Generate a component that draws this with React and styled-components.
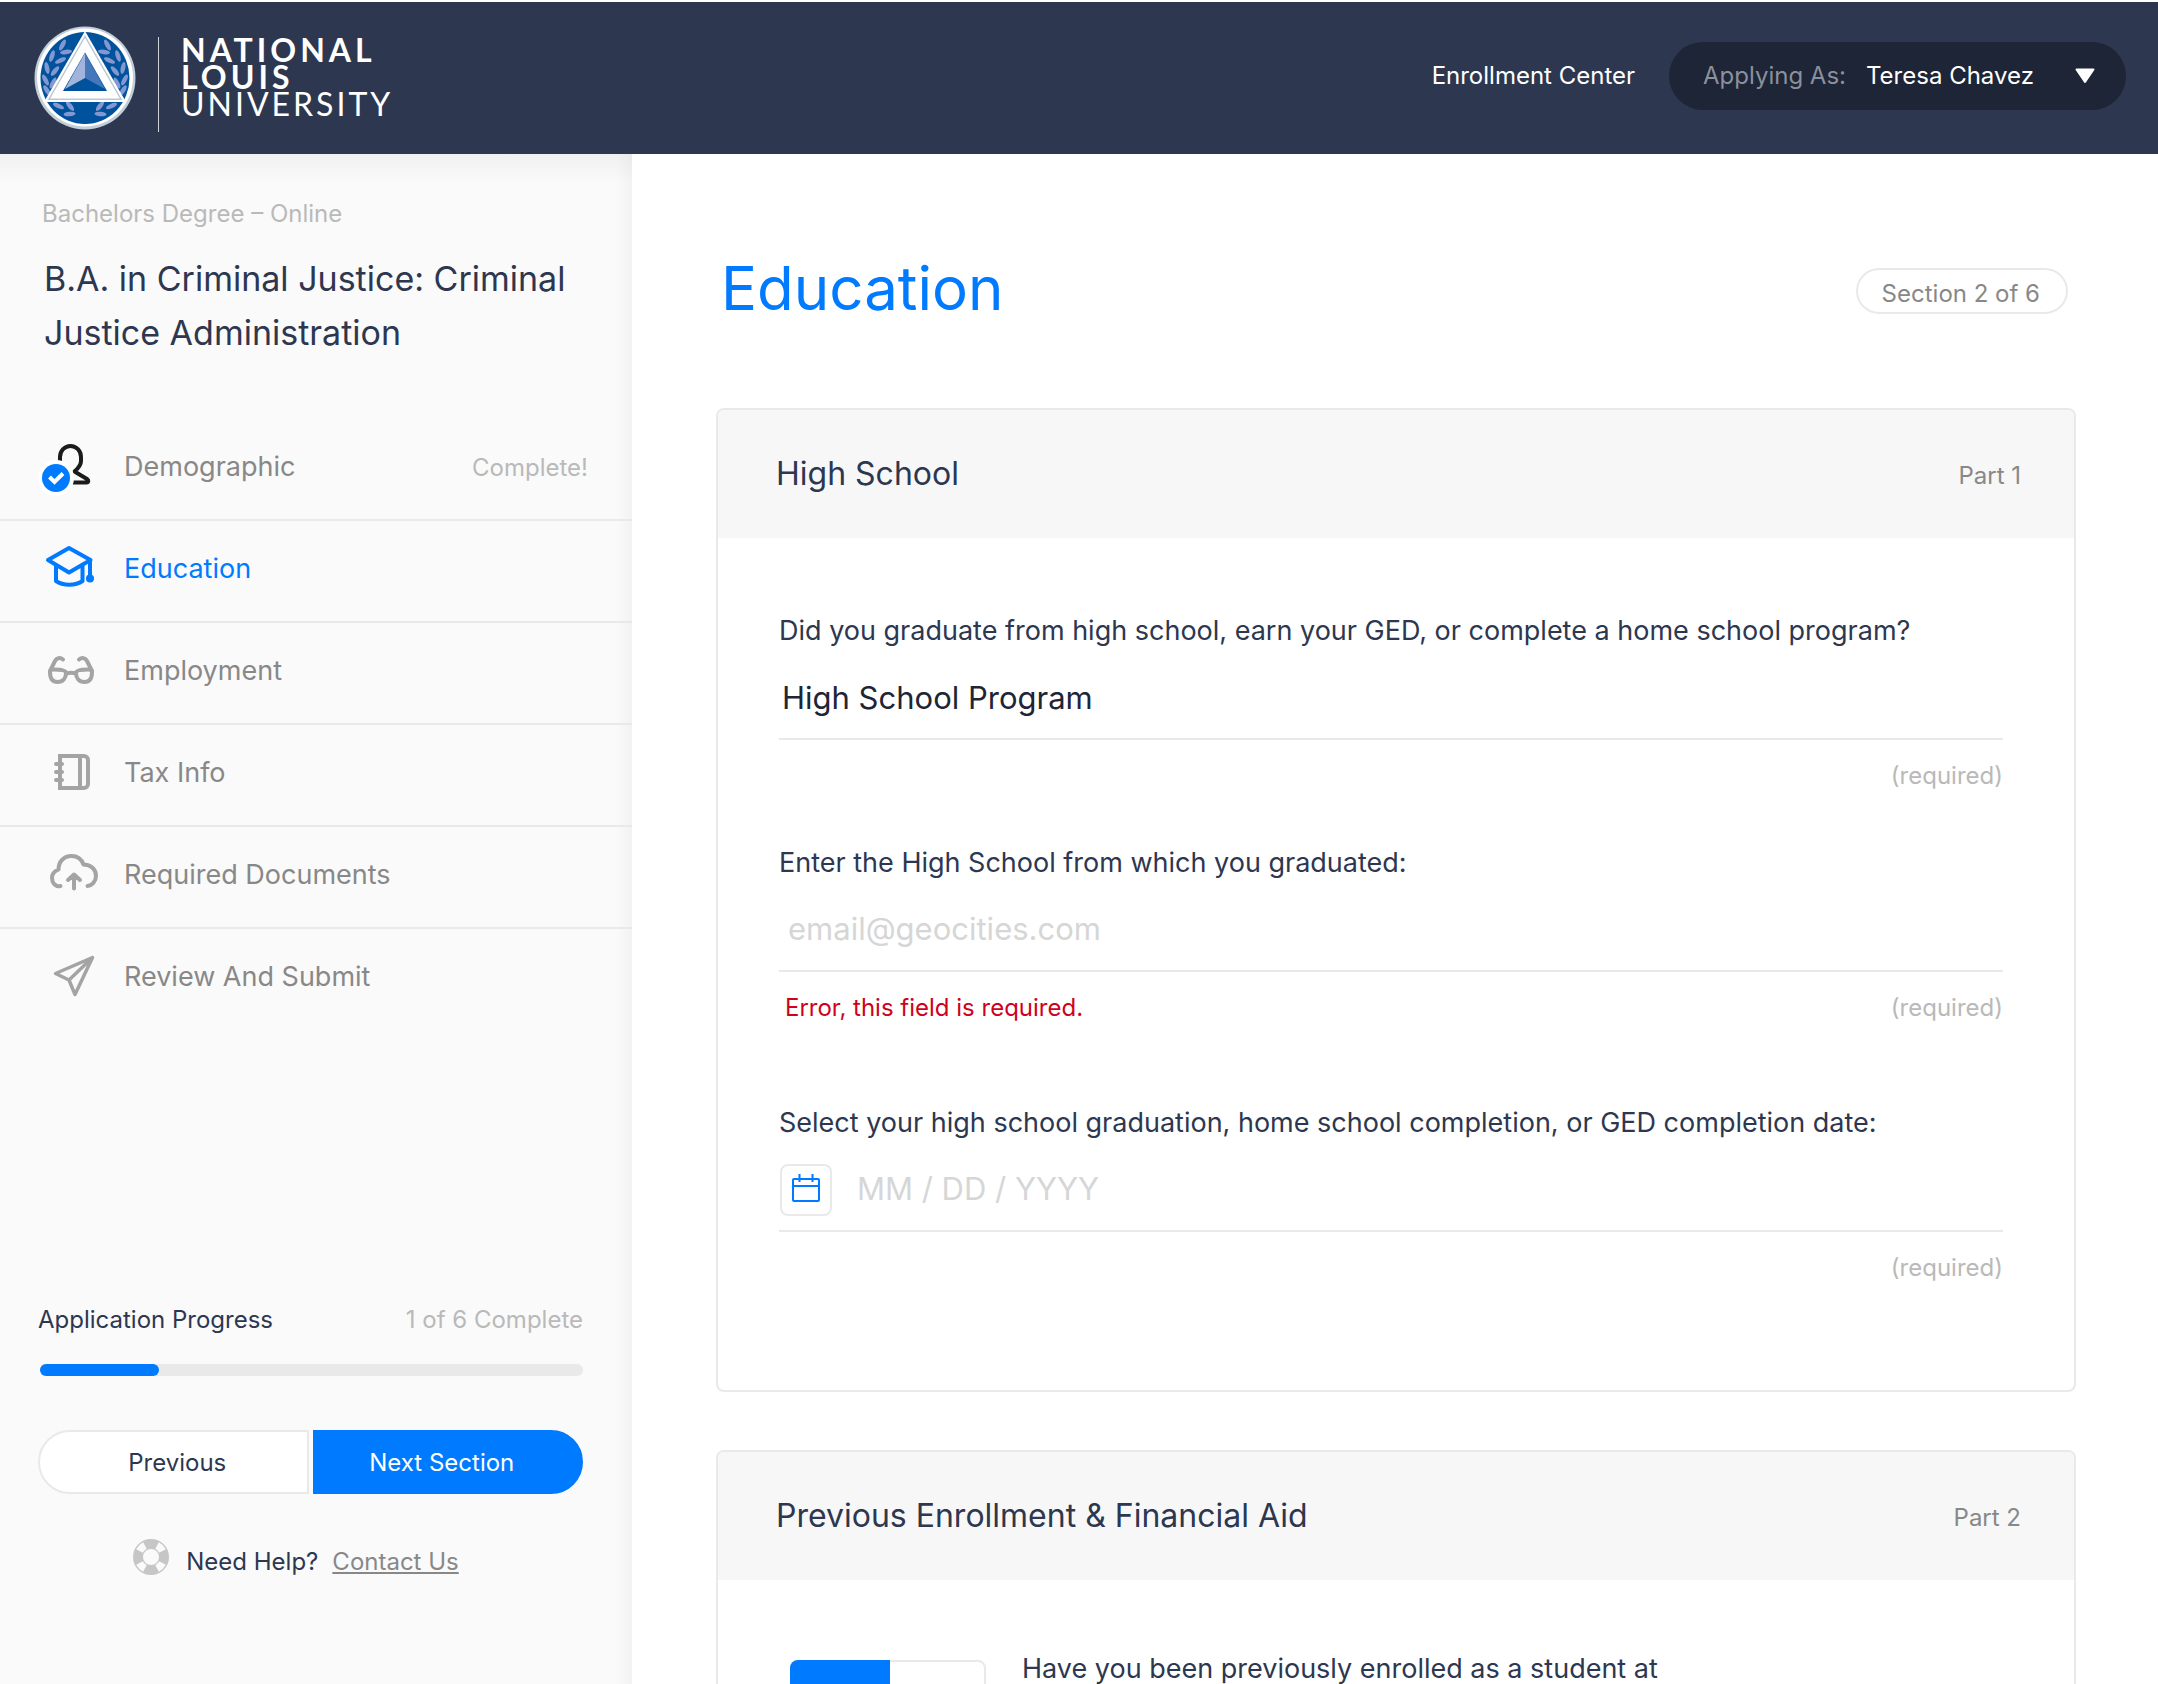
import React, { useState } from 'react';
import styled, { createGlobalStyle } from 'styled-components';

const color = {
  navy: '#2d3750',
  ink: '#1d2536',
  blue: '#007aff',
  line: '#e9e9e9',
  text: '#888888',
  muted: '#b9b9b9',
  ghost: '#d6d6d6',
  icon: '#a4a4a4',
  error: '#d0021b',
};

const GlobalStyle = createGlobalStyle`
  *, *::before, *::after { box-sizing: border-box; }
  body {
    margin: 0;
    background: #ffffff;
    color: ${color.navy};
    font-family: Inter, "Liberation Sans", sans-serif;
    font-size: 24px;
    line-height: 32px;
  }
  button, input, select { font: inherit; color: inherit; margin: 0; }
  h1, h2, p, ul, fieldset { margin: 0; padding: 0; border: 0; font-weight: 400; }
`;

const Shell = styled.div`
  height: 100vh;
  display: grid;
  grid-template: auto minmax(0, 1fr) / 632px minmax(0, 1fr);
`;

/* ---------- top bar ---------- */

const TopBar = styled.header`
  grid-column: 1 / -1;
  height: 154px;
  border-top: 2px solid #ffffff;
  background: ${color.navy};
  color: #ffffff;
  display: flex;
  align-items: center;
  justify-content: space-between;
  padding: 0 32px 0 34px;
`;

const Brand = styled.a`
  display: flex;
  align-items: center;
  color: inherit;
  text-decoration: none;
`;

const BrandRule = styled.span`
  width: 1px;
  height: 95px;
  margin: 12px 22px 0;
  background: #cfd3da;
`;

const Wordmark = styled.span`
  display: flex;
  flex-direction: column;
  padding-bottom: 4px;
  font-family: Lato, sans-serif;
  font-size: 32px;
  line-height: 27px;
  font-weight: 700;
  letter-spacing: 4px;
`;

const WordmarkLight = styled.span`
  font-weight: 400;
  letter-spacing: 3px;
`;

const TopNav = styled.nav`
  display: flex;
  align-items: center;
  gap: 34px;
  padding-bottom: 4px;
`;

const TopLink = styled.a`
  color: inherit;
  text-decoration: none;
`;

const Account = styled.div`
  display: flex;
  align-items: center;
  gap: 20px;
  height: 68px;
  padding: 0 30px 0 34px;
  border-radius: 34px;
  background: ${color.ink};
`;

const AccountLabel = styled.label`
  color: #8b909d;
`;

const AccountPicker = styled.div`
  display: flex;
  align-items: center;
  gap: 40px;
`;

const AccountSelect = styled.select`
  appearance: none;
  border: 0;
  padding: 0;
  background: transparent;
  color: #ffffff;
`;

/* ---------- sidebar ---------- */

const Sidebar = styled.aside`
  display: flex;
  flex-direction: column;
  padding: 44px 0 98px;
  overflow-y: auto;
  scrollbar-width: none;
  background:
    linear-gradient(to bottom, rgba(0, 0, 0, 0.04), rgba(0, 0, 0, 0)) top / 100% 30px no-repeat,
    linear-gradient(to left, rgba(0, 0, 0, 0.03), rgba(0, 0, 0, 0)) right / 16px 100% no-repeat,
    #fafafa;
`;

const Degree = styled.p`
  padding: 0 42px;
  color: ${color.muted};
`;

const Program = styled.h2`
  margin: 22px 42px 59px 44px;
  font-size: 34px;
  line-height: 54px;
`;

const Steps = styled.ul`
  list-style: none;
`;

const Step = styled.li`
  height: 102px;
  border-bottom: 2px solid ${color.line};
  &:last-child { border-bottom-color: transparent; }
`;

const StepLink = styled.a`
  display: flex;
  align-items: center;
  height: 100%;
  padding: 0 44px 4px 38px;
  font-size: 27px;
  text-decoration: none;
  color: ${(p) => (p.$active ? color.blue : color.text)};
`;

const StepIcon = styled.svg`
  flex: none;
  width: 64px;
  height: 64px;
  margin: 0 22px 2px 0;
  fill: none;
  stroke: ${(p) => (p.$active ? color.blue : color.icon)};
  stroke-width: 4;
  stroke-linecap: round;
  stroke-linejoin: round;
`;

const StepStatus = styled.span`
  margin-left: auto;
  padding-top: 2px;
  font-size: 24px;
  color: ${color.muted};
`;

const SidebarFooter = styled.footer`
  margin-top: auto;
  padding: 0 49px 0 38px;
`;

const ProgressLabels = styled.div`
  display: flex;
  justify-content: space-between;
  margin-bottom: 28px;
`;

const Muted = styled.span`
  color: ${color.muted};
`;

const ProgressTrack = styled.div`
  height: 12px;
  margin-left: 2px;
  border-radius: 6px;
  background: ${color.line};
`;

const ProgressFill = styled.div`
  height: 100%;
  border-radius: 6px;
  background: ${color.blue};
`;

const Pager = styled.div`
  display: grid;
  grid-template-columns: 1fr 1fr;
  gap: 4px;
  margin: 54px 0 44px;
`;

const PagerButton = styled.button`
  height: 64px;
  border: 2px solid ${(p) => (p.$primary ? color.blue : color.line)};
  border-radius: ${(p) => (p.$primary ? '0 32px 32px 0' : '32px 0 0 32px')};
  background: ${(p) => (p.$primary ? color.blue : '#ffffff')};
  color: ${(p) => (p.$primary ? '#ffffff' : color.navy)};
  padding: ${(p) => (p.$primary ? '2px 12px 0 0' : '2px 0 0 8px')};
`;

const Help = styled.p`
  display: flex;
  align-items: center;
  justify-content: center;
  padding-right: 30px;
`;

const HelpIcon = styled.svg`
  width: 38px;
  height: 38px;
  margin: 0 16px 10px 0;
`;

const HelpLink = styled.a`
  margin-left: 14px;
  color: ${color.text};
  text-underline-offset: 2px;
  text-decoration-thickness: 2px;
`;

/* ---------- main column ---------- */

const Main = styled.main`
  overflow-y: auto;
  scrollbar-width: none;
  padding: 98px 82px 60px 84px;
`;

const PageHead = styled.div`
  display: flex;
  align-items: center;
  justify-content: space-between;
  padding: 0 8px 0 5px;
  margin-bottom: 84px;
`;

const PageTitle = styled.h1`
  font-size: 60px;
  line-height: 72px;
  color: ${color.blue};
`;

const SectionBadge = styled.span`
  height: 46px;
  margin-top: 6px;
  padding: 8px 26px 0 24px;
  border: 2px solid ${color.line};
  border-radius: 23px;
  color: ${color.text};
`;

const Card = styled.section`
  border: 2px solid ${color.line};
  border-radius: 8px;
  margin-bottom: 58px;
  overflow: hidden;
`;

const CardHead = styled.div`
  display: flex;
  align-items: center;
  justify-content: space-between;
  height: 128px;
  padding: 0 53px 0 58px;
  background: #f7f7f7;
`;

const CardTitle = styled.h2`
  font-size: 32px;
  line-height: 40px;
`;

const CardPart = styled.span`
  padding-top: 4px;
  color: ${color.text};
`;

const Fields = styled.div`
  padding: 75px 71px 106px 61px;
`;

const Field = styled.div`
  &:not(:last-child) { margin-bottom: ${(p) => (p.$error ? 81 : 53)}px; }
`;

const FieldLabel = styled.label`
  display: block;
  margin-bottom: 5px;
  font-size: 27px;
  line-height: 36px;
`;

const Control = styled.div`
  display: flex;
  align-items: center;
  gap: 16px;
  height: 86px;
  border-bottom: 2px solid ${color.line};
`;

const TextInput = styled.input`
  flex: 1;
  min-width: 0;
  height: 60px;
  border: 0;
  padding: 0 9px;
  background: transparent;
  font-size: 31px;
  color: ${color.ink};
  &::placeholder { color: ${color.ghost}; opacity: 1; }
`;

const SelectInput = styled.select`
  flex: 1;
  appearance: none;
  height: 60px;
  border: 0;
  padding: 4px 3px 0;
  background: transparent;
  font-size: 31px;
  line-height: 44px;
  color: ${color.ink};
`;

const CalendarButton = styled.button`
  display: flex;
  align-items: center;
  justify-content: center;
  flex: none;
  width: 52px;
  height: 52px;
  margin: 4px 0 0 1px;
  padding: 0 0 4px;
  border: 2px solid ${color.line};
  border-radius: 8px;
  background: #ffffff;
`;

const FieldNotes = styled.div`
  display: flex;
  justify-content: space-between;
  margin-top: 20px;
`;

const ErrorText = styled.span`
  padding-left: 6px;
  color: ${color.error};
`;

const Required = styled.span`
  margin-left: auto;
  color: ${color.muted};
`;

const Question = styled.fieldset`
  display: flex;
  align-items: flex-start;
  gap: 36px;
  padding: 69px 72px;
`;

const QuestionText = styled.p`
  max-width: 680px;
  font-size: 27px;
  line-height: 40px;
`;

const Toggle = styled.div`
  display: flex;
  flex: none;
  width: 196px;
  height: 76px;
  margin-top: 11px;
  border: 2px solid ${color.line};
  border-radius: 8px;
`;

const ToggleOption = styled.label`
  flex: 1;
  display: flex;
  align-items: center;
  justify-content: center;
  margin: -2px;
  padding-top: 10px;
  border-radius: ${(p) => (p.$checked ? '8px 0 0 8px' : '0')};
  background: ${(p) => (p.$checked ? color.blue : 'transparent')};
  color: ${(p) => (p.$checked ? '#ffffff' : color.text)};
`;

const ToggleRadio = styled.input`
  appearance: none;
  width: 0;
  height: 0;
`;

/* ---------- drawings ---------- */

const leaves = [
  [28.5, 19, -62], [32, 26, -8], [18, 30, -72], [26.5, 34.5, -25],
  [13, 42, 78], [21, 45, -50], [11.5, 54, 62], [19, 57, -62],
  [13, 64.5, 58], [24.5, 80, 25], [36, 80, 52], [35.5, 88, -5],
];

function Seal() {
  const branch = leaves.map(([x, y, r]) => (
    <ellipse key={`${x}-${y}`} cx={x} cy={y} rx="6" ry="2.3" transform={`rotate(${r} ${x} ${y})`} />
  ));
  return (
    <svg width="102" height="104" viewBox="0 0 102 104" aria-hidden="true">
      <ellipse cx="51" cy="52" rx="50.5" ry="51.5" fill="#c3cfd8" />
      <ellipse cx="51" cy="51.5" rx="48" ry="49" fill="#fff" />
      <ellipse cx="51" cy="52" rx="44.5" ry="46" fill="#00529c" />
      <g fill="#8398d0">
        {branch}
        <g transform="translate(102 0) scale(-1 1)">{branch}</g>
      </g>
      <path d="M51 5L10 76h82z" fill="#fff" />
      <path d="M51 10.5L15 73.200h72z" fill="none" stroke="#bcc8d0" strokeWidth="1.5" />
      <path d="M51 26.5L29 65h44z" fill="#00529c" />
      <path d="M51 27L31 63l20-11z" fill="#a3b4dc" />
      <path d="M51 27l20 36-20-11z" fill="#4577bb" />
    </svg>
  );
}

function Caret() {
  return (
    <svg width="22" height="16" viewBox="0 0 22 16" aria-hidden="true">
      <path d="M2.5 1.5h17L11 14z" fill="#fff" stroke="#fff" strokeWidth="2" strokeLinejoin="round" />
    </svg>
  );
}

const icons = {
  person: (
    <>
      <path stroke="#1b1b1b" d="M22 28V23a10.500 11 0 0 1 21 0v4c0 4-2.500 7-6.500 10.500l12.500 7.500c2 1.300 1.500 3.500-.5 3.500H34" />
      <circle cx="18" cy="44" r="18" fill="#fff" stroke="none" />
      <circle cx="18" cy="44" r="14" fill={color.blue} stroke="none" />
      <path stroke="#fff" strokeLinecap="butt" strokeLinejoin="miter" d="M11.500 43l5 5 8.500-8.500" />
    </>
  ),
  cap: (
    <>
      <path d="M10 24l21-12 21.500 12L31 36.500z" />
      <path d="M18 30v15c7 5 19.500 5 26.500 0V30M52 25v16" />
      <circle cx="52" cy="42.5" r="4" fill={color.blue} stroke="none" />
    </>
  ),
  glasses: (
    <>
      <path d="M12 34c0-2 1.500-2.500 4-2.500 4 0 12 0 12 3.500 0 5-3 9-8.500 9C14 44 12 40.500 12 34z" />
      <path d="M54 34c0-2-1.500-2.500-4-2.500-4 0-12 0-12 3.500 0 5 3 9 8.500 9C52 44 54 40.500 54 34z" />
      <path d="M28 35.500c3-1 7-1 10 0M12 33l5-10c1.500-3 5-4 8-1.500M54 33l-5-10c-1.500-3-5-4-8-1.500" />
    </>
  ),
  notebook: (
    <path strokeLinejoin="miter" d="M22 16h24a4 4 0 0 1 4 4v24a4 4 0 0 1-4 4H22zM42 16v32M18 24h6M18 32h6M18 40h6" />
  ),
  cloud: (
    <path d="M22.500 44C17 45 14 40.500 14 36c0-4 2.500-7 6.500-8.500 0-8 5.500-13.500 13-13.500 5.500 0 10 3 12 8.500 7.500 0 12.500 5 12.500 11.500 0 5.500-4 9.500-8.500 10M36 46.500V32.500M30 38l6-5.500 6 5.500" />
  ),
  plane: <path strokeWidth="3.5" d="M54.500 13.500L17.500 29.500 31 36l6 14.500zM31 36l23.500-22.500" />,
};

function CalendarIcon() {
  return (
    <svg width="28" height="28" viewBox="0 0 28 28" fill="none" stroke={color.blue} strokeWidth="2" aria-hidden="true">
      <rect x="1" y="5" width="26" height="22" rx="1" />
      <path d="M1 12h26M7.500 0v8M20.500 0v8" />
    </svg>
  );
}

function LifeRing() {
  return (
    <HelpIcon viewBox="0 0 38 38" fill="none" aria-hidden="true">
      <circle cx="19" cy="19" r="13" stroke="#c6c6c6" strokeWidth="10" />
      <circle
        cx="19" cy="19" r="13" stroke="#fafafa" strokeWidth="7.5"
        pathLength="360" strokeDasharray="34 56" strokeDashoffset="-28"
      />
    </HelpIcon>
  );
}

/* ---------- page ---------- */

const steps = [
  { label: 'Demographic', icon: 'person', status: 'Complete!' },
  { label: 'Education', icon: 'cap', active: true },
  { label: 'Employment', icon: 'glasses' },
  { label: 'Tax Info', icon: 'notebook' },
  { label: 'Required Documents', icon: 'cloud' },
  { label: 'Review And Submit', icon: 'plane' },
];

export default function App() {
  const [enrolled, setEnrolled] = useState(true);
  const progress = 22;

  return (
    <>
      <GlobalStyle />
      <Shell>
        <TopBar>
          <Brand href="#" aria-label="National Louis University">
            <Seal />
            <BrandRule />
            <Wordmark>
              <span>NATIONAL</span>
              <span>LOUIS</span>
              <WordmarkLight>UNIVERSITY</WordmarkLight>
            </Wordmark>
          </Brand>
          <TopNav>
            <TopLink href="#">Enrollment Center</TopLink>
            <Account>
              <AccountLabel htmlFor="account">Applying As:</AccountLabel>
              <AccountPicker>
                <AccountSelect id="account">
                  <option>Teresa Chavez</option>
                </AccountSelect>
                <Caret />
              </AccountPicker>
            </Account>
          </TopNav>
        </TopBar>

        <Sidebar>
          <Degree>Bachelors Degree – Online</Degree>
          <Program>B.A. in Criminal Justice: Criminal Justice Administration</Program>
          <Steps>
            {steps.map((s) => (
              <Step key={s.label}>
                <StepLink href="#" $active={s.active}>
                  <StepIcon viewBox="0 0 64 64" $active={s.active} aria-hidden="true">
                    {icons[s.icon]}
                  </StepIcon>
                  {s.label}
                  {s.status && <StepStatus>{s.status}</StepStatus>}
                </StepLink>
              </Step>
            ))}
          </Steps>
          <SidebarFooter>
            <ProgressLabels>
              <span>Application Progress</span>
              <Muted>1 of 6 Complete</Muted>
            </ProgressLabels>
            <ProgressTrack>
              <ProgressFill style={{ width: `${progress}%` }} />
            </ProgressTrack>
            <Pager>
              <PagerButton type="button">Previous</PagerButton>
              <PagerButton type="button" $primary>Next Section</PagerButton>
            </Pager>
            <Help>
              <LifeRing />
              Need Help?
              <HelpLink href="#">Contact Us</HelpLink>
            </Help>
          </SidebarFooter>
        </Sidebar>

        <Main>
          <PageHead>
            <PageTitle>Education</PageTitle>
            <SectionBadge>Section 2 of 6</SectionBadge>
          </PageHead>

          <Card>
            <CardHead>
              <CardTitle>High School</CardTitle>
              <CardPart>Part 1</CardPart>
            </CardHead>
            <Fields>
              <Field>
                <FieldLabel htmlFor="program">
                  Did you graduate from high school, earn your GED, or complete a home school program?
                </FieldLabel>
                <Control>
                  <SelectInput id="program">
                    <option>High School Program</option>
                  </SelectInput>
                </Control>
                <FieldNotes><Required>(required)</Required></FieldNotes>
              </Field>
              <Field $error>
                <FieldLabel htmlFor="school">Enter the High School from which you graduated:</FieldLabel>
                <Control>
                  <TextInput id="school" placeholder="email@geocities.com" aria-invalid="true" aria-describedby="school-error" />
                </Control>
                <FieldNotes>
                  <ErrorText id="school-error">Error, this field is required.</ErrorText>
                  <Required>(required)</Required>
                </FieldNotes>
              </Field>
              <Field>
                <FieldLabel htmlFor="date">
                  Select your high school graduation, home school completion, or GED completion date:
                </FieldLabel>
                <Control>
                  <CalendarButton type="button" aria-label="Open calendar"><CalendarIcon /></CalendarButton>
                  <TextInput id="date" placeholder="MM / DD / YYYY" />
                </Control>
                <FieldNotes><Required>(required)</Required></FieldNotes>
              </Field>
            </Fields>
          </Card>

          <Card>
            <CardHead>
              <CardTitle>Previous Enrollment &amp; Financial Aid</CardTitle>
              <CardPart>Part 2</CardPart>
            </CardHead>
            <Question aria-labelledby="enrolled-question">
              <Toggle>
                <ToggleOption $checked={enrolled}>
                  <ToggleRadio type="radio" name="enrolled" checked={enrolled} onChange={() => setEnrolled(true)} />
                  Yes
                </ToggleOption>
                <ToggleOption $checked={!enrolled}>
                  <ToggleRadio type="radio" name="enrolled" checked={!enrolled} onChange={() => setEnrolled(false)} />
                  No
                </ToggleOption>
              </Toggle>
              <QuestionText id="enrolled-question">
                Have you been previously enrolled as a student at National Louis University?
              </QuestionText>
            </Question>
          </Card>
        </Main>
      </Shell>
    </>
  );
}
